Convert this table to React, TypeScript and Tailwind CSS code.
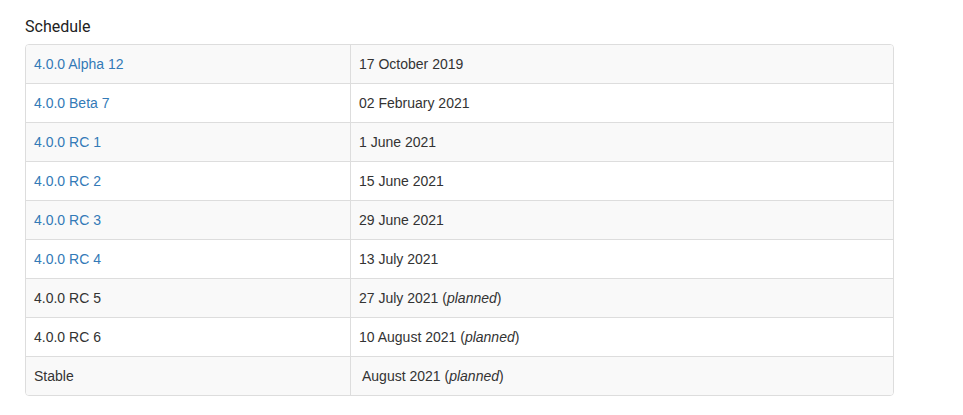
import React from "react";

type Row = { name: string; link: boolean; date: string; planned?: boolean; extra?: boolean };

const rows: Row[] = [
  { name: "4.0.0 Alpha 12", link: true, date: "17 October 2019" },
  { name: "4.0.0 Beta 7", link: true, date: "02 February 2021" },
  { name: "4.0.0 RC 1", link: true, date: "1 June 2021" },
  { name: "4.0.0 RC 2", link: true, date: "15 June 2021" },
  { name: "4.0.0 RC 3", link: true, date: "29 June 2021" },
  { name: "4.0.0 RC 4", link: true, date: "13 July 2021" },
  { name: "4.0.0 RC 5", link: false, date: "27 July 2021", planned: true },
  { name: "4.0.0 RC 6", link: false, date: "10 August 2021", planned: true },
  { name: "Stable", link: false, date: "August 2021", planned: true, extra: true },
];

export default function App() {
  return (
    <div className="w-[963px] h-[415px] bg-white pl-[25px] pt-[17px]" style={{ fontFamily: '"Liberation Sans", Arial, sans-serif' }}>
      <h3 className="text-[16px] leading-[20px] text-[#222] mb-[7px]" style={{ fontFamily: 'Roboto, sans-serif' }}>
        Schedule
      </h3>
      <div className="w-[869px] border border-[#ddd] rounded-[4px] overflow-hidden text-[14px] text-[#333]">
        {rows.map((r, i) => (
          <div
            key={i}
            className={`grid grid-cols-[325px_1fr] ${i > 0 ? "h-[39px] border-t border-[#ddd]" : "h-[38px]"} ${i % 2 === 0 ? "bg-[#f9f9f9]" : "bg-white"}`}
          >
            <div className="flex items-center pl-[8px] border-r border-[#ddd]">
              {r.link ? <a className="text-[#337ab7]">{r.name}</a> : <span>{r.name}</span>}
            </div>
            <div className={`flex items-center ${r.extra ? "pl-[11px]" : "pl-[8px]"}`}>
              <span>
                {r.date}
                {r.planned && (
                  <>
                    {" ("}
                    <em>planned</em>
                    {")"}
                  </>
                )}
              </span>
            </div>
          </div>
        ))}
      </div>
    </div>
  );
}
